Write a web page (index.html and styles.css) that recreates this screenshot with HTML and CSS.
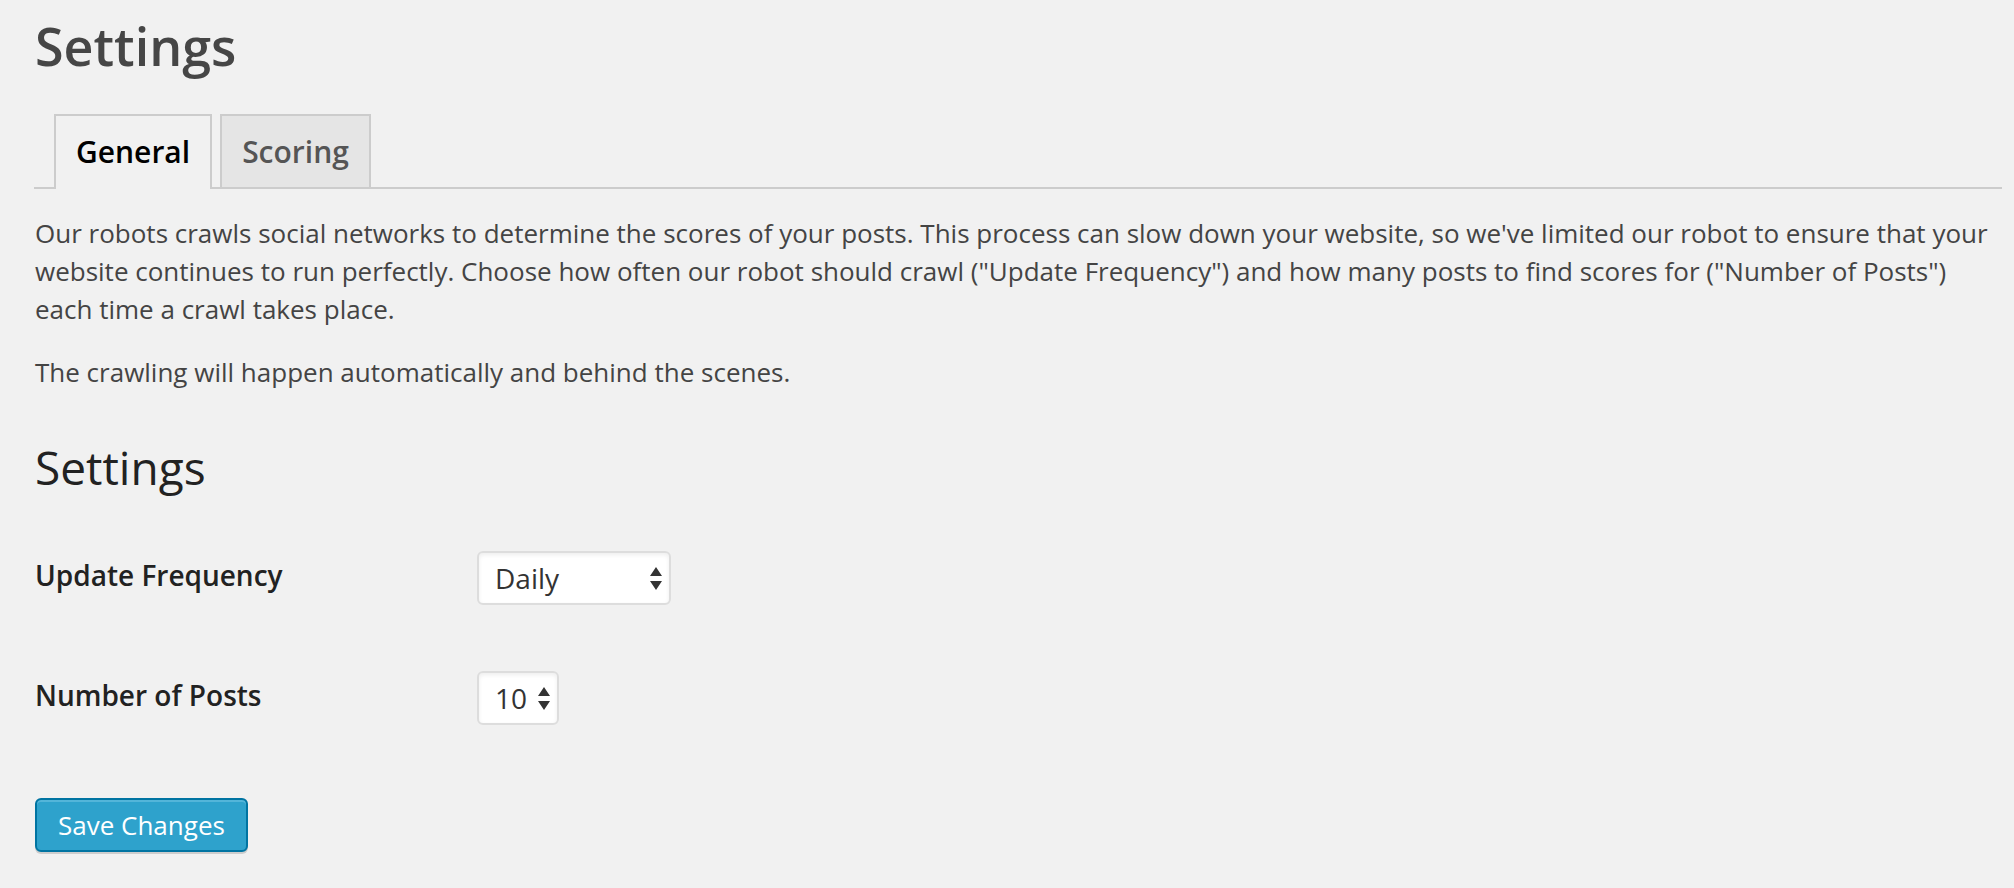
FILE: index.html
```html
<!DOCTYPE html>
<html lang="en">
<head>
<meta charset="utf-8">
<title>Settings</title>
<link rel="stylesheet" href="styles.css">
</head>
<body>
<div class="wrap">
  <h1 class="page-title">Settings</h1>
  <nav class="tabs">
    <a class="tab tab-active" href="#">General</a>
    <a class="tab" href="#">Scoring</a>
  </nav>
  <p class="intro">Our robots crawls social networks to determine the scores of your posts. This process can slow down your website, so we've limited our robot to ensure that your website continues to run perfectly. Choose how often our robot should crawl ("Update Frequency") and how many posts to find scores for ("Number of Posts") each time a crawl takes place.</p>
  <p class="note">The crawling will happen automatically and behind the scenes.</p>
  <h2 class="section-title">Settings</h2>
  <form class="form-table">
    <label class="field-label" for="freq">Update Frequency</label>
    <div class="select-wrap">
      <select id="freq" class="select select-wide">
        <option>Daily</option>
        <option>Twice Daily</option>
        <option>Hourly</option>
      </select>
      <svg class="arrows" width="12" height="23" viewBox="0 0 12 23" aria-hidden="true"><path d="M6 0 L12 9 L0 9 Z M0 14 L12 14 L6 23 Z"/></svg>
    </div>
    <label class="field-label" for="num">Number of Posts</label>
    <div class="select-wrap">
      <select id="num" class="select select-narrow">
        <option>10</option>
        <option>20</option>
        <option>50</option>
      </select>
      <svg class="arrows" width="12" height="23" viewBox="0 0 12 23" aria-hidden="true"><path d="M6 0 L12 9 L0 9 Z M0 14 L12 14 L6 23 Z"/></svg>
    </div>
  </form>
  <button class="btn-primary" type="button">Save Changes</button>
</div>
</body>
</html>
```

FILE: styles.css
```css
html, body {
  margin: 0;
  padding: 0;
}

body {
  background: #f1f1f1;
  font-family: "Open Sans", "Noto Sans", sans-serif;
  color: #444;
}

.wrap {
  padding: 10.5px 12px 40px 35px;
}

.page-title {
  margin: 0;
  font-size: 52px;
  line-height: 70px;
  font-weight: 600;
  color: #464646;
}

.tabs {
  display: flex;
  gap: 8px;
  margin: 33.5px 0 0 -1px;
  padding-left: 20px;
  border-bottom: 2px solid #ccc;
}

.tab {
  display: block;
  padding: 12px 20px 11px;
  margin-bottom: -2px;
  font-size: 30px;
  line-height: 48px;
  font-weight: 600;
  color: #555;
  text-decoration: none;
  background: #e5e5e5;
  border: 2px solid #ccc;
}

.tab-active {
  padding-bottom: 13px;
  border-bottom: none;
  background: #f1f1f1;
  color: #000;
}

.intro,
.note {
  margin: 26px 0 0;
  font-size: 26px;
  line-height: 37.7px;
}

.intro {
  margin-top: 26.3px;
}

.section-title {
  margin: 44.6px 0 0;
  font-size: 46px;
  line-height: 60px;
  font-weight: 400;
  color: #222;
}

.form-table {
  display: grid;
  grid-template-columns: 442px auto;
  grid-auto-rows: 54px;
  row-gap: 66px;
  align-items: center;
  justify-items: start;
  margin-top: 54.6px;
}

.field-label {
  font-size: 28px;
  line-height: 36px;
  font-weight: 600;
  color: #222;
  padding-bottom: 6px;
}

.select-wrap {
  position: relative;
  display: inline-flex;
}

.select {
  -webkit-appearance: none;
  appearance: none;
  box-sizing: border-box;
  height: 54px;
  margin: 0;
  padding: 0 40px 0 16px;
  font-family: "Open Sans", "Noto Sans", sans-serif;
  font-size: 28px;
  color: #333;
  background: #fff;
  border: 2px solid #ddd;
  border-radius: 6px;
  box-shadow: inset 0 2px 4px rgba(0, 0, 0, 0.07);
  outline: none;
}

.select-wide {
  width: 194px;
}

.select-narrow {
  width: 82px;
  padding-right: 20px;
}

.arrows {
  position: absolute;
  right: 9px;
  top: 15.5px;
  fill: #333;
  pointer-events: none;
}

.btn-primary {
  display: block;
  box-sizing: border-box;
  height: 54px;
  margin-top: 73px;
  padding: 0 21px;
  font-family: "Open Sans", "Noto Sans", sans-serif;
  font-size: 26px;
  line-height: 50px;
  color: #fff;
  background: #2ea2cc;
  border: 2px solid #0074a2;
  border-radius: 6px;
  box-shadow: inset 0 2px 0 rgba(120, 200, 230, 0.5), 0 2px 0 rgba(0, 0, 0, 0.15);
  cursor: pointer;
}
```
